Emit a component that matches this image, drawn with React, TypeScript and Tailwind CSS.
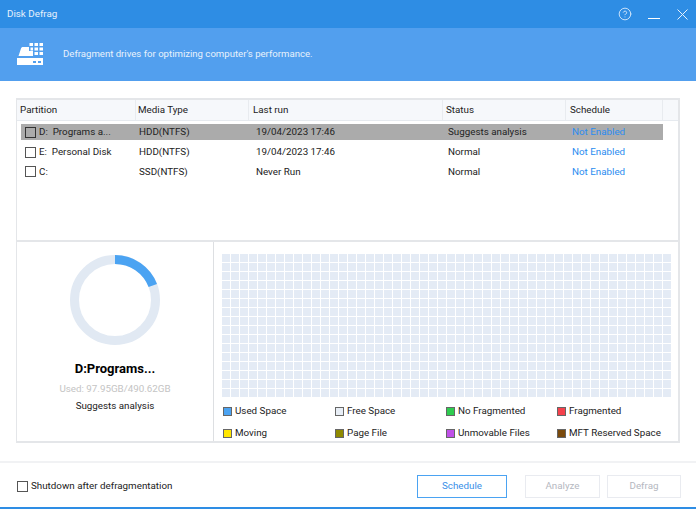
import { HelpCircle } from 'lucide-react'

const COLUMNS = [
  { label: 'Partition', className: 'w-[119px] pl-[3px]' },
  { label: 'Media Type', className: 'w-[113px] pl-[2px]' },
  { label: 'Last run', className: 'w-[194px] pl-[4px]' },
  { label: 'Status', className: 'w-[123px] pl-[3px]' },
  { label: 'Schedule', className: 'w-[97px] pl-[4px]' },
]

const DRIVES = [
  { name: 'D:  Programs a...', media: 'HDD(NTFS)', lastRun: '19/04/2023 17:46', status: 'Suggests analysis', selected: true },
  { name: 'E:  Personal Disk', media: 'HDD(NTFS)', lastRun: '19/04/2023 17:46', status: 'Normal', selected: false },
  { name: 'C:', media: 'SSD(NTFS)', lastRun: 'Never Run', status: 'Normal', selected: false },
]

const LEGEND = [
  { label: 'Used Space', color: 'bg-[#4ba3f2]' },
  { label: 'Free Space', color: 'bg-[#e8eef6]' },
  { label: 'No Fragmented', color: 'bg-[#2ecc4f]' },
  { label: 'Fragmented', color: 'bg-[#f5414c]' },
  { label: 'Moving', color: 'bg-[#ffe600]' },
  { label: 'Page File', color: 'bg-[#8f8a00]' },
  { label: 'Unmovable Files', color: 'bg-[#c050e8]' },
  { label: 'MFT Reserved Space', color: 'bg-[#7a4a0c]' },
]

const BLOCKS = Array.from({ length: 50 * 16 })

function DriveIcon() {
  return (
    <svg width="30" height="24" viewBox="0 0 30 24" fill="#fff">
      <path d="M5 5.5 C5.300 4.500 6 4 7 4 H13 V8 H17 V13 H2.500 Z" />
      <rect x="13.500" y="0" width="3.500" height="3" />
      <rect x="18.500" y="0" width="3.500" height="3" />
      <rect x="23.500" y="0" width="3.500" height="3" />
      <rect x="14.500" y="4.500" width="2.500" height="3" />
      <rect x="18.500" y="4.500" width="3.500" height="3" />
      <rect x="23.500" y="4.500" width="3.500" height="3" />
      <rect x="18.500" y="9" width="3.500" height="3" />
      <rect x="23.500" y="9" width="3.500" height="3" />
      <path fillRule="evenodd" d="M1 15 H27 V22 H1 Z M17 18 V20 H20 V18 Z M22 18 V20 H25 V18 Z" />
    </svg>
  )
}

function UsageRing() {
  // 97.95 of 490.62 GB used
  return (
    <svg width="92" height="92" viewBox="0 0 92 92" fill="none">
      <circle cx="46" cy="46" r="40.500" stroke="#e1e9f3" strokeWidth="9" />
      <path d="M46 5.500 A40.500 40.500 0 0 1 83.800 31.500" stroke="#4ba3f2" strokeWidth="9" />
    </svg>
  )
}

function Checkbox({ dark }: { dark?: boolean }) {
  return (
    <span className={`block h-[11px] w-[11px] shrink-0 border ${dark ? 'border-[#333333]' : 'border-[#555555]'}`} />
  )
}

export default function App() {
  return (
    <div className="flex h-[509px] w-[696px] flex-col overflow-hidden bg-white font-['Roboto',sans-serif] text-[9.8px] text-[#222222]">
      <div className="flex h-[28px] shrink-0 items-center justify-between bg-[#2e8de4] pl-[7px] pr-[8px]">
        <span className="text-[#e8f2fc]">Disk Defrag</span>
        <div className="flex items-center">
          <HelpCircle size={14} strokeWidth={1.500} className="mr-[16px] text-[#dcecfb]" />
          <span className="mr-[17px] mt-[9px] block h-[1px] w-[12px] bg-white" />
          <svg width="11" height="11" viewBox="0 0 11 11" stroke="#e8f2fc" strokeWidth="1">
            <path d="M0.500 0.500 L10.500 10.500 M10.500 0.500 L0.500 10.500" />
          </svg>
        </div>
      </div>

      <div className="flex h-[53px] shrink-0 items-center bg-[#529fee] pl-[16px]">
        <DriveIcon />
        <span className="ml-[17px] text-[9.600px] text-[#e8f2fc]">Defragment drives for optimizing computer's performance.</span>
      </div>

      <div className="mx-[16px] mt-[17px] flex h-[345px] flex-col border-2 border-[#e4e6e9] border-l-[1px]">
        <div className="flex h-[142px] shrink-0 flex-col border-b-2 border-[#e4e6e9]">
          <div className="flex h-[21px] shrink-0 items-center border-b border-[#e6eaef] bg-[#f6f8fb]">
            {COLUMNS.map((col) => (
              <div key={col.label} className={`${col.className} flex h-full items-center border-r border-[#e8ebef]`}>
                {col.label}
              </div>
            ))}
          </div>
          <div className="pt-[3px]">
            {DRIVES.map((drive) => (
              <div key={drive.name} className={`mb-[3.700px] ml-[4px] flex h-[16px] w-[642px] items-center pt-[1px] ${drive.selected ? 'bg-[#ababab]' : ''}`}>
                <div className="flex w-[118px] items-center pl-[4px]">
                  <Checkbox dark={drive.selected} />
                  <span className="ml-[3px] whitespace-pre">{drive.name}</span>
                </div>
                <div className="w-[117px]">{drive.media}</div>
                <div className="w-[192px]">{drive.lastRun}</div>
                <div className="w-[124px]">{drive.status}</div>
                <div className="text-[#2b8cf0]">Not Enabled</div>
              </div>
            ))}
          </div>
        </div>

        <div className="flex min-h-0 flex-1">
          <div className="flex w-[197px] shrink-0 flex-col items-center border-r border-[#dddfe2] pt-[12px]">
            <UsageRing />
            <div className="mt-[13px] text-[13px] font-bold text-black">D:Programs...</div>
            <div className="mt-[3px] text-[#c4c4c4]">Used: 97.95GB/490.62GB</div>
            <div className="mt-[3px]">Suggests analysis</div>
          </div>
          <div className="flex flex-col pl-[8px] pt-[12px]">
            <div className="grid w-[448px] grid-cols-[repeat(50,8px)] grid-rows-[repeat(16,8px)] gap-[1px]">
              {BLOCKS.map((_, i) => (
                <span key={i} className="bg-[#e4ebf5]" />
              ))}
            </div>
            <div className="ml-[1px] mt-[9px] grid grid-cols-[112px_111px_111px_112px] gap-y-[11px]">
              {LEGEND.map((item) => (
                <div key={item.label} className="flex h-[11px] items-center whitespace-nowrap">
                  <span className={`${item.color} mr-[3px] h-[9px] w-[9px] shrink-0 border border-[#666666]`} />
                  {item.label}
                </div>
              ))}
            </div>
          </div>
        </div>
      </div>

      <div className="mt-[18px] flex h-[46px] shrink-0 items-center border-t-2 border-[#f1f2f4] pl-[17px] pr-[15px] pt-[3px]">
        <Checkbox />
        <span className="ml-[3px]">Shutdown after defragmentation</span>
        <button className="ml-auto h-[23px] w-[90px] border border-[#4ba3f2] text-[#3a8fe8]">Schedule</button>
        <button className="ml-[18px] h-[23px] w-[75px] border border-[#e9ebf0] text-[#b5b8bf]">Analyze</button>
        <button className="ml-[7px] h-[23px] w-[74px] border border-[#e9ebf0] text-[#b5b8bf]">Defrag</button>
      </div>
      <div className="h-[2px] shrink-0 bg-[#2e8de4]" />
    </div>
  )
}
